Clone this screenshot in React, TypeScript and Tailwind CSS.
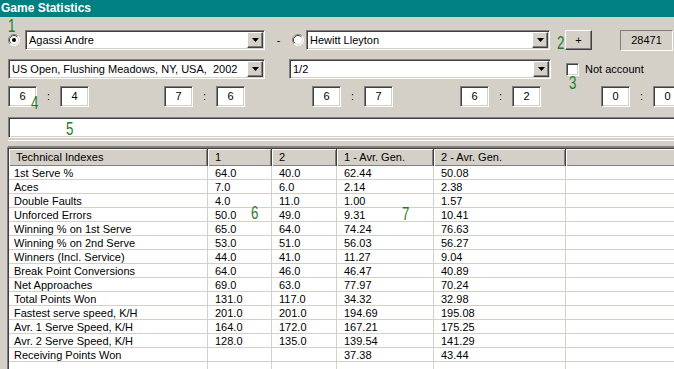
import React from "react";

const sunken =
  "border border-t-[#808080] border-l-[#808080] border-b-white border-r-white shadow-[inset_1px_1px_0_#404040,inset_-1px_-1px_0_#d4d0c8]";
const raised =
  "border border-t-white border-l-white border-b-[#404040] border-r-[#404040] shadow-[inset_-1px_-1px_0_#808080,inset_1px_1px_0_#d4d0c8]";

const rows: string[][] = [
  ["1st Serve %", "64.0", "40.0", "62.44", "50.08"],
  ["Aces", "7.0", "6.0", "2.14", "2.38"],
  ["Double Faults", "4.0", "11.0", "1.00", "1.57"],
  ["Unforced Errors", "50.0", "49.0", "9.31", "10.41"],
  ["Winning % on 1st Serve", "65.0", "64.0", "74.24", "76.63"],
  ["Winning % on 2nd Serve", "53.0", "51.0", "56.03", "56.27"],
  ["Winners (Incl. Service)", "44.0", "41.0", "11.27", "9.04"],
  ["Break Point Conversions", "64.0", "46.0", "46.47", "40.89"],
  ["Net Approaches", "69.0", "63.0", "77.97", "70.24"],
  ["Total Points Won", "131.0", "117.0", "34.32", "32.98"],
  ["Fastest serve speed, K/H", "201.0", "201.0", "194.69", "195.08"],
  ["Avr. 1 Serve Speed, K/H", "164.0", "172.0", "167.21", "175.25"],
  ["Avr. 2 Serve Speed, K/H", "128.0", "135.0", "139.54", "141.29"],
  ["Receiving Points Won", "", "", "37.38", "43.44"],
  ["", "", "", "", ""],
];

const headers = ["Technical Indexes", "1", "2", "1 - Avr. Gen.", "2 - Avr. Gen.", ""];
const gridCols = "grid grid-cols-[199px_64px_65px_97px_132px_130px]";

function Arrow() {
  return (
    <svg width="7" height="4" viewBox="0 0 7 4">
      <path d="M0 0h7L3.5 4z" fill="#000" />
    </svg>
  );
}

function Radio({ checked }: { checked?: boolean }) {
  return (
    <svg width="12" height="12" viewBox="0 0 12 12" className="shrink-0">
      <circle cx="6" cy="6" r="5.5" fill="#fff" />
      <path d="M2.1 9.9A5.5 5.5 0 0 1 9.9 2.1" stroke="#808080" fill="none" />
      <path d="M9.9 2.1A5.5 5.5 0 0 1 2.1 9.9" stroke="#fff" fill="none" />
      <path d="M2.8 9.2A4.5 4.5 0 0 1 9.2 2.8" stroke="#404040" fill="none" />
      <path d="M9.2 2.8A4.5 4.5 0 0 1 2.8 9.2" stroke="#d4d0c8" fill="none" />
      {checked && <circle cx="6" cy="6" r="2" fill="#000" />}
    </svg>
  );
}

function Combo({ text, className }: { text: string; className: string }) {
  return (
    <div className={`flex h-[20px] items-center bg-white ${sunken} ${className}`}>
      <span className="flex-1 truncate whitespace-pre pl-[3px] text-[11px] text-black">{text}</span>
      <div className={`mr-[1px] flex h-[16px] w-[16px] items-center justify-center bg-[#d4d0c8] ${raised}`}>
        <Arrow />
      </div>
    </div>
  );
}

function ScoreBox({ v }: { v: string }) {
  return (
    <div className={`flex h-[21px] w-[29px] items-center justify-center bg-white text-[11px] ${sunken}`}>
      {v}
    </div>
  );
}

function ScorePair({ a, b, className }: { a: string; b: string; className?: string }) {
  return (
    <div className={`flex items-center ${className ?? ""}`}>
      <ScoreBox v={a} />
      <span className="w-[23px] text-center text-[11px]">:</span>
      <ScoreBox v={b} />
    </div>
  );
}

function Mark({ n, x, y }: { n: string; x: number; y: number }) {
  return (
    <span
      className="pointer-events-none absolute origin-left scale-x-70 text-[19px] leading-[19px] text-[#1f7d1f]"
      style={{ left: x, top: y - 3 }}
    >
      {n}
    </span>
  );
}

export default function App() {
  return (
    <div className="relative h-[369px] w-[674px] overflow-hidden bg-[#d4d0c8] font-['Liberation_Sans',Arial,sans-serif] text-black">
      <div className="h-[17px] bg-[#008080] pl-[1px] text-[12px] font-bold leading-[17px] text-white">
        Game Statistics
      </div>

      <div className="flex flex-col pl-[8px]">
        {/* players */}
        <div className="mt-[13px] flex h-[20px] items-center">
          <Radio checked />
          <Combo text="Agassi Andre" className="ml-[5px] w-[240px]" />
          <span className="w-[27px] text-center text-[11px]">-</span>
          <Radio />
          <Combo text="Hewitt Lleyton" className="ml-[2px] w-[244px]" />
          <div className={`ml-[15px] flex h-[20px] w-[27px] items-center justify-center bg-[#d4d0c8] text-[11px] ${raised}`}>
            +
          </div>
          <div className="ml-[28px] flex h-[21px] w-[53px] items-center justify-center border border-t-[#808080] border-l-[#808080] border-b-white border-r-white text-[11px]">
            28471
          </div>
        </div>

        {/* tournament */}
        <div className="mt-[9px] flex h-[20px] items-center">
          <Combo text="US Open, Flushing Meadows, NY, USA,  2002" className="w-[257px]" />
          <Combo text="1/2" className="ml-[24px] w-[262px]" />
          <div className={`ml-[15px] h-[13px] w-[13px] bg-white ${sunken}`} />
          <span className="ml-[6px] text-[11px]">Not account</span>
        </div>

        {/* sets */}
        <div className="mt-[7px] flex h-[21px] items-center">
          <ScorePair a="6" b="4" />
          <ScorePair a="7" b="6" className="ml-[75px]" />
          <ScorePair a="6" b="7" className="ml-[67px]" />
          <ScorePair a="6" b="2" className="ml-[67px]" />
          <ScorePair a="0" b="0" className="ml-[60px]" />
        </div>

        {/* comment */}
        <div className={`mt-[10px] h-[21px] w-[680px] bg-white ${sunken}`} />

        <div className="mt-[2px] h-[7px] border-t border-b border-t-white border-b-[#808080]" />
      </div>

      {/* table */}
      <div className="ml-[7px] border-t border-l border-[#808080] shadow-[inset_1px_1px_0_#404040]">
        <div className={`${gridCols} h-[18px] pl-[1px] pt-[1px]`}>
          {headers.map((h, i) => (
            <div
              key={i}
              className="flex items-center border-r border-b border-[#404040] bg-[#d4d0c8] pl-[7px] text-[11px] shadow-[inset_1px_1px_0_#fff,inset_-1px_-1px_0_#808080]"
            >
              {h}
            </div>
          ))}
        </div>
        <div className="pl-[1px]">
          {rows.map((r, i) => (
            <div key={i} className={`${gridCols} h-[14px]`}>
              {[...r, ""].map((c, j) => (
                <div
                  key={j}
                  className={`flex items-center border-r border-b border-[#d4d0c8] bg-white pt-[2px] text-[11px] leading-none ${
                    j === 0 ? "pl-[5px]" : "pl-[7px]"
                  }`}
                >
                  {c}
                </div>
              ))}
            </div>
          ))}
        </div>
      </div>

      <Mark n="1" x={8} y={19} />
      <Mark n="2" x={557} y={36} />
      <Mark n="3" x={569} y={76} />
      <Mark n="4" x={31} y={96} />
      <Mark n="5" x={66} y={122} />
      <Mark n="6" x={251} y={206} />
      <Mark n="7" x={402} y={207} />
    </div>
  );
}
